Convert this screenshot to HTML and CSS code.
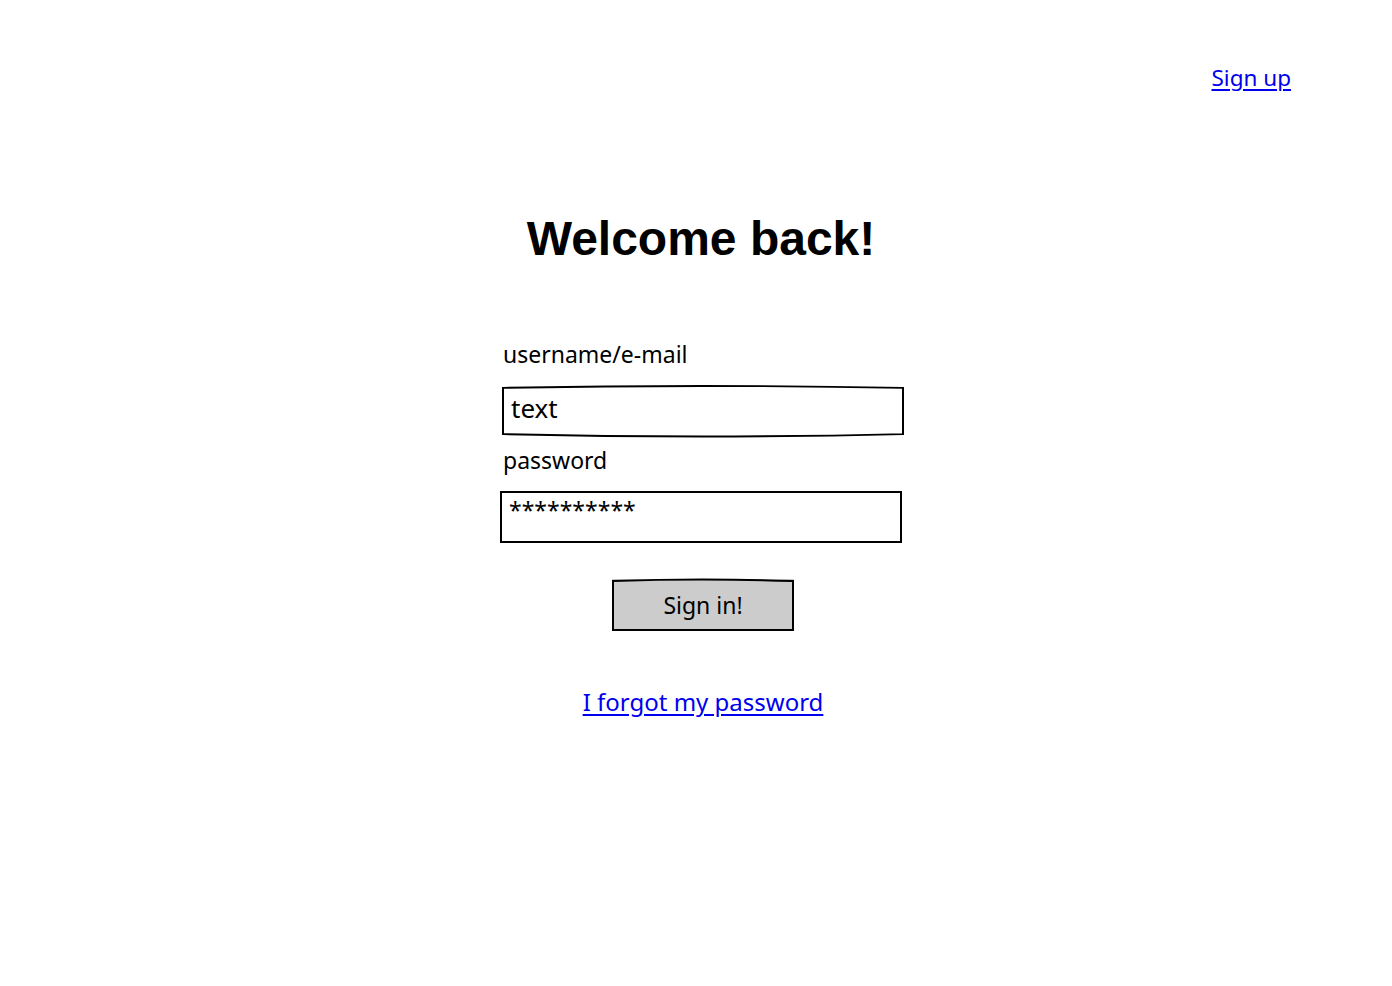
FILE: index.html
```html
<!DOCTYPE html>
<html>
<head>
<meta charset="utf-8">
<link rel="stylesheet" href="styles.css">
</head>
<body>
<header class="topbar">
  <a class="link signup" href="#">Sign up</a>
</header>
<main class="page">
  <h1 class="title">Welcome back!</h1>
  <form class="form">
    <label class="label">username/e-mail</label>
    <div class="field field-sketch">
      <span class="field-text">text</span>
      <svg class="sketch" viewBox="0 0 402 54" preserveAspectRatio="none"><path d="M1 3 Q200 -1 401 3 L401 51 Q200 56 1 51 Z" fill="none" stroke="#000" stroke-width="2"/></svg>
    </div>
    <label class="label label-pw">password</label>
    <div class="field field-plain">
      <span class="field-text stars">**********</span>
    </div>
    <div class="actions">
      <button type="button" class="btn">Sign in!
        <svg class="sketch" viewBox="0 0 182 52" preserveAspectRatio="none"><path d="M1 2 Q90 -1 181 2 L181 51 L1 51 Z" fill="none" stroke="#000" stroke-width="2"/></svg>
      </button>
    </div>
    <div class="forgot-row">
      <a class="link forgot" href="#">I forgot my password</a>
    </div>
  </form>
</main>
</body>
</html>
```
FILE: styles.css
```css
body {
  margin: 0;
  background: #fff;
  color: #000;
  font-family: "Noto Sans", "DejaVu Sans", sans-serif;
}
.topbar {
  display: flex;
  justify-content: flex-end;
  padding: 62px 101px 0 0;
}
.link {
  color: #0000ee;
  text-decoration: underline;
  text-underline-offset: 3px;
}
.signup {
  font-size: 22.5px;
}
.page {
  display: flex;
  flex-direction: column;
  align-items: center;
}
.title {
  font-family: "Liberation Sans", Arial, sans-serif;
  font-weight: bold;
  font-size: 48px;
  margin: 118px 0 0 10px;
  line-height: 56px;
}
.form {
  width: 402px;
  margin: 72px 0 0 14px;
  display: flex;
  flex-direction: column;
}
.label {
  font-size: 23px;
  line-height: 30px;
  padding-left: 1px;
}
.label-pw {
  margin-top: 8px;
}
.field {
  position: relative;
  height: 52px;
  box-sizing: border-box;
}
.field-sketch {
  margin-top: 16px;
  padding: 6px 9px;
}
.field-plain {
  margin-top: 16px;
  margin-left: -2px;
  width: 402px;
  border: 2px solid #000;
  padding: 2px 7px;
}
.field-text {
  font-size: 26px;
  line-height: 34px;
}
.stars {
  font-size: 23px;
  line-height: 30px;
  letter-spacing: 0;
}
.sketch {
  position: absolute;
  inset: 0;
  width: 100%;
  height: 100%;
  overflow: visible;
}
.actions {
  display: flex;
  justify-content: center;
  margin-top: 36px;
}
.btn {
  position: relative;
  width: 182px;
  height: 52px;
  background: #cccccc;
  border: none;
  font-family: inherit;
  font-size: 23px;
  color: #000;
  padding: 0;
}
.forgot-row {
  display: flex;
  justify-content: center;
  margin-top: 54px;
}
.forgot {
  font-size: 24px;
}
```
